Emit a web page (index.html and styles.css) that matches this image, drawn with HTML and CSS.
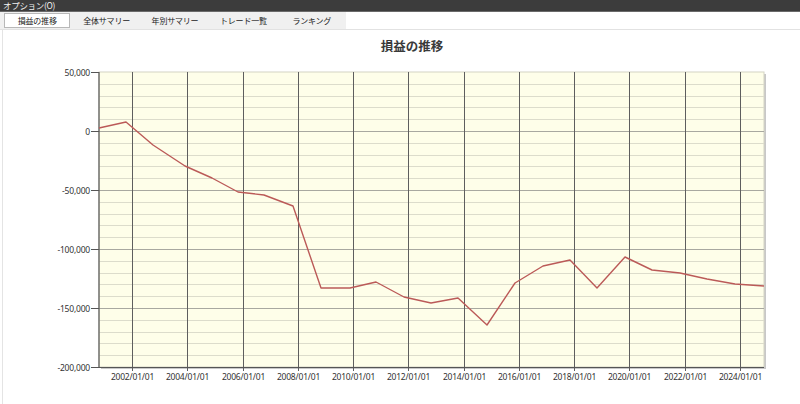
FILE: index.html
```html
<!DOCTYPE html>
<html lang="ja">
<head>
<meta charset="utf-8">
<link rel="stylesheet" href="styles.css">
</head>
<body>
<div class="app">
  <div class="menubar"><span class="menu-item">オプション(O)</span></div>
  <div class="tabbar">
    <div class="tabs">
      <div class="tab active">損益の推移</div>
      <div class="tab">全体サマリー</div>
      <div class="tab">年別サマリー</div>
      <div class="tab">トレード一覧</div>
      <div class="tab">ランキング</div>
    </div>
  </div>
  <div class="panel">
    <svg class="chart" width="798" height="374" viewBox="2 30 798 374" xmlns="http://www.w3.org/2000/svg">
      <text class="title" x="411" y="51" text-anchor="middle">損益の推移</text>
      <!-- shadow -->
      <rect x="100" y="74" width="665" height="295" fill="#c8c8c8"/>
      <rect x="98" y="72" width="665" height="295" fill="#fefee9" stroke="#d4d4c4" stroke-width="1"/>
      <g id="hgrid" stroke="#dcdccb" stroke-width="1" shape-rendering="crispEdges"></g>
      <g id="hmajor" stroke="#a8a8a0" stroke-width="1" shape-rendering="crispEdges"></g>
      <g id="vgrid" stroke="#5e5e5e" stroke-width="1" shape-rendering="crispEdges"></g>
      <line x1="98" y1="72" x2="98" y2="367.5" stroke="#555" stroke-width="1.2"/>
      <line x1="97.5" y1="367.5" x2="763" y2="367.5" stroke="#555" stroke-width="1.2"/>
      <g id="yticks" stroke="#555" stroke-width="1" shape-rendering="crispEdges"></g>
      <g id="ylabels" class="axis-label"></g>
      <g id="xlabels" class="axis-label"></g>
      <polyline fill="none" stroke="#bb5a58" stroke-width="1.4" stroke-linejoin="round"
        points="98,128 125,122 152,145 184,166 211,178 237,192 263,195 292,206 320,288 349,288 375,282 403,297 430,303 457,298 486,325 514,283 542,266 569,260 596,288 624,257 651,270 679,273 706,279 734,284 763,286"/>
    </svg>
  </div>
</div>
<script src="chart.js"></script>
</body>
</html>
```

FILE: chart.js
```js
(function () {
  var NS = "http://www.w3.org/2000/svg";
  function el(name, attrs, text) {
    var e = document.createElementNS(NS, name);
    for (var k in attrs) e.setAttribute(k, attrs[k]);
    if (text) e.textContent = text;
    return e;
  }
  var top = 72, bottom = 367, left = 98, right = 763;
  var step = (bottom - top) / 25;
  var hgrid = document.getElementById("hgrid");
  var hmajor = document.getElementById("hmajor");
  var yticks = document.getElementById("yticks");
  var ylabels = document.getElementById("ylabels");
  var labels = ["50,000", "0", "-50,000", "-100,000", "-150,000", "-200,000"];
  for (var i = 1; i < 25; i++) {
    var y = Math.round(top + step * i) + 0.5;
    var g = (i % 5 === 0) ? hmajor : hgrid;
    g.appendChild(el("line", { x1: left, y1: y, x2: right, y2: y }));
  }
  for (var j = 0; j <= 5; j++) {
    var yy = Math.round(top + step * 5 * j) + 0.5;
    yticks.appendChild(el("line", { x1: 90, y1: yy, x2: 98, y2: yy }));
    ylabels.appendChild(el("text", { x: 89, y: yy + 3, "text-anchor": "end" }, labels[j]));
  }
  var vgrid = document.getElementById("vgrid");
  var xlabels = document.getElementById("xlabels");
  var x0 = 131, dx = (739 - 131) / 11;
  for (var k = 0; k < 12; k++) {
    var x = Math.round(x0 + dx * k) + 0.5;
    vgrid.appendChild(el("line", { x1: x, y1: top, x2: x, y2: 371 }));
    xlabels.appendChild(el("text", { x: x, y: 380, "text-anchor": "middle" }, (2002 + 2 * k) + "/01/01"));
  }
})();
```

FILE: styles.css
```css
html, body {
  margin: 0;
  padding: 0;
  background: #ffffff;
}
body {
  font-family: "Noto Sans CJK JP", "Noto Sans", sans-serif;
  width: 800px;
  height: 404px;
  overflow: hidden;
}
.app {
  display: flex;
  flex-direction: column;
  height: 404px;
}
.menubar {
  height: 11px;
  background: #3c3c3c;
  border-bottom: 1px solid #6a6a6a;
  display: flex;
  align-items: center;
  padding-left: 3px;
}
.menu-item {
  color: #f2f2f2;
  font-size: 8.5px;
  line-height: 11px;
  letter-spacing: -0.3px;
}
.tabbar {
  height: 17px;
  background: #ffffff;
  border-bottom: 1px solid #e2e2e2;
  display: flex;
}
.tabs {
  width: 346px;
  background: #f0f0f0;
  display: flex;
  align-items: stretch;
  padding: 1px 0 1px 4px;
  box-sizing: border-box;
}
.tab {
  width: 69px;
  font-size: 8px;
  color: #222;
  display: flex;
  align-items: center;
  justify-content: center;
  letter-spacing: -0.2px;
}
.tab.active {
  width: 67px;
  background: #ffffff;
  border: 1px solid #b8b8b8;
  box-sizing: border-box;
  margin-right: 2px;
}
.panel {
  flex: 1;
  margin-left: 2px;
  border-left: 1px solid #e4e4e4;
  background: #ffffff;
}
.chart {
  display: block;
}
.title {
  font-family: "Noto Sans CJK JP", sans-serif;
  font-size: 12.5px;
  font-weight: 700;
  fill: #3a3a3a;
}
.axis-label text {
  font-family: "Noto Sans", "Liberation Sans", sans-serif;
  font-size: 8.5px;
  fill: #333;
  letter-spacing: -0.2px;
}
```
